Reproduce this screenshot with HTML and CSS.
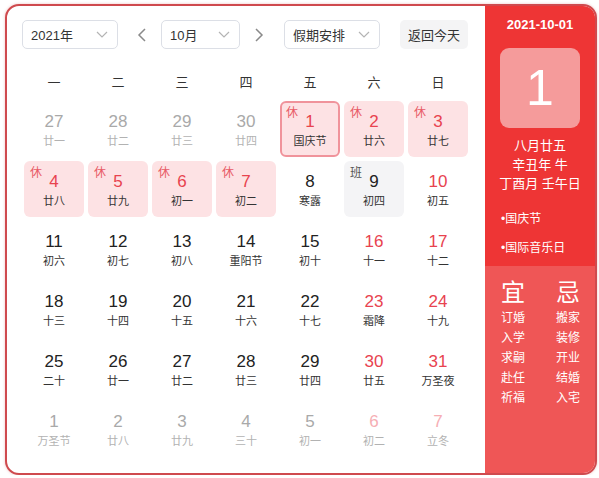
FILE: index.html
```html
<!DOCTYPE html>
<html lang="zh-CN">
<head>
<meta charset="utf-8">
<title>日历</title>
<link rel="stylesheet" href="styles.css">
</head>
<body>
<div class="calendar">
  <div class="main">
    <div class="toolbar">
      <div class="select sel-year"><span>2021年</span><svg class="chev" width="12" height="7" viewBox="0 0 12 7"><path d="M1 1 L6 6 L11 1" fill="none" stroke="#b4b4b4" stroke-width="1.2"/></svg></div>
      <div class="arrow arrow-prev"><svg width="10" height="14" viewBox="0 0 10 14"><path d="M8 1 L2 7 L8 13" fill="none" stroke="#8a8a8a" stroke-width="1.5"/></svg></div>
      <div class="select sel-month"><span>10月</span><svg class="chev" width="12" height="7" viewBox="0 0 12 7"><path d="M1 1 L6 6 L11 1" fill="none" stroke="#b4b4b4" stroke-width="1.2"/></svg></div>
      <div class="arrow arrow-next"><svg width="10" height="14" viewBox="0 0 10 14"><path d="M2 1 L8 7 L2 13" fill="none" stroke="#8a8a8a" stroke-width="1.5"/></svg></div>
      <div class="select sel-holiday"><span>假期安排</span><svg class="chev" width="12" height="7" viewBox="0 0 12 7"><path d="M1 1 L6 6 L11 1" fill="none" stroke="#b4b4b4" stroke-width="1.2"/></svg></div>
      <div class="today-btn">返回今天</div>
    </div>
    <div class="weekdays">
      <span>一</span><span>二</span><span>三</span><span>四</span><span>五</span><span>六</span><span>日</span>
    </div>
    <div class="grid">
      <div class="cell other"><div class="num">27</div><div class="lunar">廿一</div></div>
      <div class="cell other"><div class="num">28</div><div class="lunar">廿二</div></div>
      <div class="cell other"><div class="num">29</div><div class="lunar">廿三</div></div>
      <div class="cell other"><div class="num">30</div><div class="lunar">廿四</div></div>
      <div class="cell holiday selected"><span class="tag">休</span><div class="num">1</div><div class="lunar">国庆节</div></div>
      <div class="cell holiday"><span class="tag">休</span><div class="num">2</div><div class="lunar">廿六</div></div>
      <div class="cell holiday"><span class="tag">休</span><div class="num">3</div><div class="lunar">廿七</div></div>

      <div class="cell holiday"><span class="tag">休</span><div class="num">4</div><div class="lunar">廿八</div></div>
      <div class="cell holiday"><span class="tag">休</span><div class="num">5</div><div class="lunar">廿九</div></div>
      <div class="cell holiday"><span class="tag">休</span><div class="num">6</div><div class="lunar">初一</div></div>
      <div class="cell holiday"><span class="tag">休</span><div class="num">7</div><div class="lunar">初二</div></div>
      <div class="cell"><div class="num">8</div><div class="lunar">寒露</div></div>
      <div class="cell work"><span class="tag">班</span><div class="num">9</div><div class="lunar">初四</div></div>
      <div class="cell weekend"><div class="num">10</div><div class="lunar">初五</div></div>

      <div class="cell"><div class="num">11</div><div class="lunar">初六</div></div>
      <div class="cell"><div class="num">12</div><div class="lunar">初七</div></div>
      <div class="cell"><div class="num">13</div><div class="lunar">初八</div></div>
      <div class="cell"><div class="num">14</div><div class="lunar">重阳节</div></div>
      <div class="cell"><div class="num">15</div><div class="lunar">初十</div></div>
      <div class="cell weekend"><div class="num">16</div><div class="lunar">十一</div></div>
      <div class="cell weekend"><div class="num">17</div><div class="lunar">十二</div></div>

      <div class="cell"><div class="num">18</div><div class="lunar">十三</div></div>
      <div class="cell"><div class="num">19</div><div class="lunar">十四</div></div>
      <div class="cell"><div class="num">20</div><div class="lunar">十五</div></div>
      <div class="cell"><div class="num">21</div><div class="lunar">十六</div></div>
      <div class="cell"><div class="num">22</div><div class="lunar">十七</div></div>
      <div class="cell weekend"><div class="num">23</div><div class="lunar">霜降</div></div>
      <div class="cell weekend"><div class="num">24</div><div class="lunar">十九</div></div>

      <div class="cell"><div class="num">25</div><div class="lunar">二十</div></div>
      <div class="cell"><div class="num">26</div><div class="lunar">廿一</div></div>
      <div class="cell"><div class="num">27</div><div class="lunar">廿二</div></div>
      <div class="cell"><div class="num">28</div><div class="lunar">廿三</div></div>
      <div class="cell"><div class="num">29</div><div class="lunar">廿四</div></div>
      <div class="cell weekend"><div class="num">30</div><div class="lunar">廿五</div></div>
      <div class="cell weekend"><div class="num">31</div><div class="lunar">万圣夜</div></div>

      <div class="cell other"><div class="num">1</div><div class="lunar">万圣节</div></div>
      <div class="cell other"><div class="num">2</div><div class="lunar">廿八</div></div>
      <div class="cell other"><div class="num">3</div><div class="lunar">廿九</div></div>
      <div class="cell other"><div class="num">4</div><div class="lunar">三十</div></div>
      <div class="cell other"><div class="num">5</div><div class="lunar">初一</div></div>
      <div class="cell other other-weekend"><div class="num">6</div><div class="lunar">初二</div></div>
      <div class="cell other other-weekend"><div class="num">7</div><div class="lunar">立冬</div></div>
    </div>
  </div>
  <div class="side">
    <div class="side-top">
      <div class="side-date">2021-10-01</div>
      <div class="big-day">1</div>
      <div class="lunar-info">
        <div>八月廿五</div>
        <div>辛丑年 牛</div>
        <div>丁酉月 壬午日</div>
      </div>
      <div class="festivals">
        <div class="fest">•国庆节</div>
        <div class="fest">•国际音乐日</div>
      </div>
    </div>
    <div class="side-bottom">
      <div class="yiji">
        <div class="col">
          <div class="yj-title">宜</div>
          <div>订婚</div><div>入学</div><div>求嗣</div><div>赴任</div><div>祈福</div>
        </div>
        <div class="col">
          <div class="yj-title">忌</div>
          <div>搬家</div><div>装修</div><div>开业</div><div>结婚</div><div>入宅</div>
        </div>
      </div>
    </div>
  </div>
</div>
</body>
</html>
```

FILE: styles.css
```css
* { box-sizing: border-box; }
html, body { margin: 0; padding: 0; background: #ffffff; }
body {
  font-family: "Liberation Sans", "Noto Sans CJK SC", sans-serif;
  color: #333;
  padding: 4px 0 0 5px;
}
.calendar {
  width: 592px;
  height: 471px;
  border: 2px solid #cf4a4e;
  border-radius: 14px;
  box-shadow: 0 0 3px rgba(207, 74, 78, 0.35);
  overflow: hidden;
  display: flex;
  background: #fff;
}
.main {
  width: 478px;
  padding: 14px 0 0 15px;
}
.toolbar {
  display: flex;
  align-items: center;
  height: 29px;
}
.select {
  height: 29px;
  border: 1px solid #dcdfe6;
  border-radius: 5px;
  display: flex;
  align-items: center;
  justify-content: space-between;
  padding: 0 9px 0 8px;
  font-size: 13px;
  color: #333;
}
.sel-year { width: 96px; }
.sel-month { width: 79px; }
.sel-holiday { width: 96px; padding-left: 8px; }
.arrow {
  width: 20px;
  height: 29px;
  display: flex;
  align-items: center;
  justify-content: center;
}
.arrow-prev { margin: 0 9px 0 14px; }
.arrow-next { margin: 0 15px 0 9px; }
.today-btn {
  margin-left: 20px;
  width: 68px;
  height: 29px;
  border-radius: 5px;
  background: #f4f4f5;
  font-size: 13px;
  display: flex;
  align-items: center;
  justify-content: center;
  color: #333;
}
.weekdays {
  margin: 20px 0 0 2px;
  width: 444px;
  height: 28px;
  display: grid;
  grid-template-columns: repeat(7, 60px);
  column-gap: 4px;
  font-size: 13px;
  line-height: 28px;
  text-align: center;
  color: #333;
}
.grid {
  margin: 4px 0 0 2px;
  width: 444px;
  display: grid;
  grid-template-columns: repeat(7, 60px);
  grid-auto-rows: 56px;
  gap: 4px;
}
.cell {
  position: relative;
  border-radius: 6px;
  padding-top: 10px;
  text-align: center;
}
.num {
  font-size: 17px;
  line-height: 22px;
  color: #222;
}
.lunar {
  font-size: 11px;
  line-height: 16px;
  color: #333;
}
.tag {
  position: absolute;
  top: 4px;
  left: 6px;
  font-size: 12px;
  line-height: 16px;
  color: #e85a65;
}
.holiday { background: #fde2e4; }
.holiday .num { color: #e8434f; }
.selected { border: 2px solid #f0939b; padding-top: 8px; }
.selected .tag { top: 2px; left: 4px; }
.work { background: #f4f4f6; }
.work .tag { color: #555; }
.weekend .num { color: #e8434f; }
.other .num { color: #a9a9a9; }
.other .lunar { color: #b2b2b2; }
.other-weekend .num { color: #f6aeb4; }
.side {
  width: 110px;
  display: flex;
  flex-direction: column;
  color: #fff;
}
.side-top {
  height: 260px;
  background: #ee3535;
  padding-top: 10px;
  display: flex;
  flex-direction: column;
  align-items: center;
}
.side-date {
  font-size: 13px;
  font-weight: bold;
  line-height: 18px;
}
.big-day {
  margin-top: 14px;
  width: 80px;
  height: 80px;
  border-radius: 9px;
  background: #f59b9b;
  font-size: 50px;
  line-height: 80px;
  text-align: center;
  color: #fff;
}
.lunar-info {
  margin-top: 8px;
  font-size: 13px;
  line-height: 19px;
  text-align: center;
}
.festivals {
  align-self: stretch;
  padding-left: 16px;
  margin-top: 12px;
}
.fest {
  font-size: 12px;
  line-height: 29px;
}
.side-bottom {
  flex: 1;
  background: #ef5656;
  padding: 13px 0 0 16px;
}
.yiji {
  display: flex;
  gap: 31px;
}
.col {
  width: 24px;
  display: flex;
  flex-direction: column;
  align-items: center;
  font-size: 12px;
  line-height: 20px;
}
.yj-title {
  font-size: 24px;
  line-height: 28px;
  margin-bottom: 1px;
}
```
